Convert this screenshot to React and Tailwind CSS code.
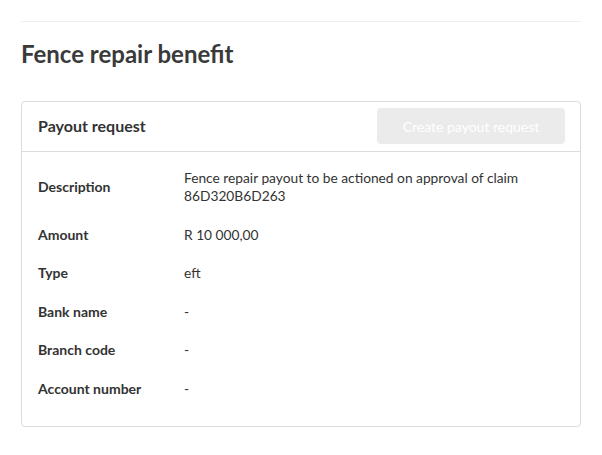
import React from 'react';

export default function App() {
  const rows = [
    { label: 'Description', value: 'Fence repair payout to be actioned on approval of claim 86D320B6D263' },
    { label: 'Amount', value: 'R 10\u202f000,00' },
    { label: 'Type', value: 'eft' },
    { label: 'Bank name', value: '-' },
    { label: 'Branch code', value: '-' },
    { label: 'Account number', value: '-' },
  ];

  return (
    <div className="min-h-[455px] bg-white px-[21px] pt-[21px] text-[#333]" style={{ fontFamily: 'Lato, "Noto Sans", sans-serif' }}>
      <div className="border-t border-[#f0f0f0]" />
      <h1 className="mt-[16px] text-[24px] leading-[32px] font-bold text-[#3a3a3a]">Fence repair benefit</h1>

      <div className="mt-[31px] rounded-[4px] border border-[#dcdcdc]">
        <div className="flex items-center justify-between border-b border-[#dcdcdc] pl-4 pr-[15px] pt-[6px] pb-[7px]">
          <h2 className="text-[16px] font-bold text-[#333]">Payout request</h2>
          <button
            type="button"
            disabled
            className="h-[36px] w-[188px] rounded-[4px] bg-[#ebebeb] text-[14px] text-white"
          >
            Create payout request
          </button>
        </div>

        <div className="grid grid-cols-[146px_1fr] items-center gap-y-[20.5px] px-4 pt-[17px] pb-[28px]">
          {rows.map((r) => (
            <React.Fragment key={r.label}>
              <div className="text-[14px] leading-[18px] font-bold text-[#333]">{r.label}</div>
              <div className="pr-10 text-[13.75px] leading-[18px] text-[#333]">{r.value}</div>
            </React.Fragment>
          ))}
        </div>
      </div>
    </div>
  );
}
